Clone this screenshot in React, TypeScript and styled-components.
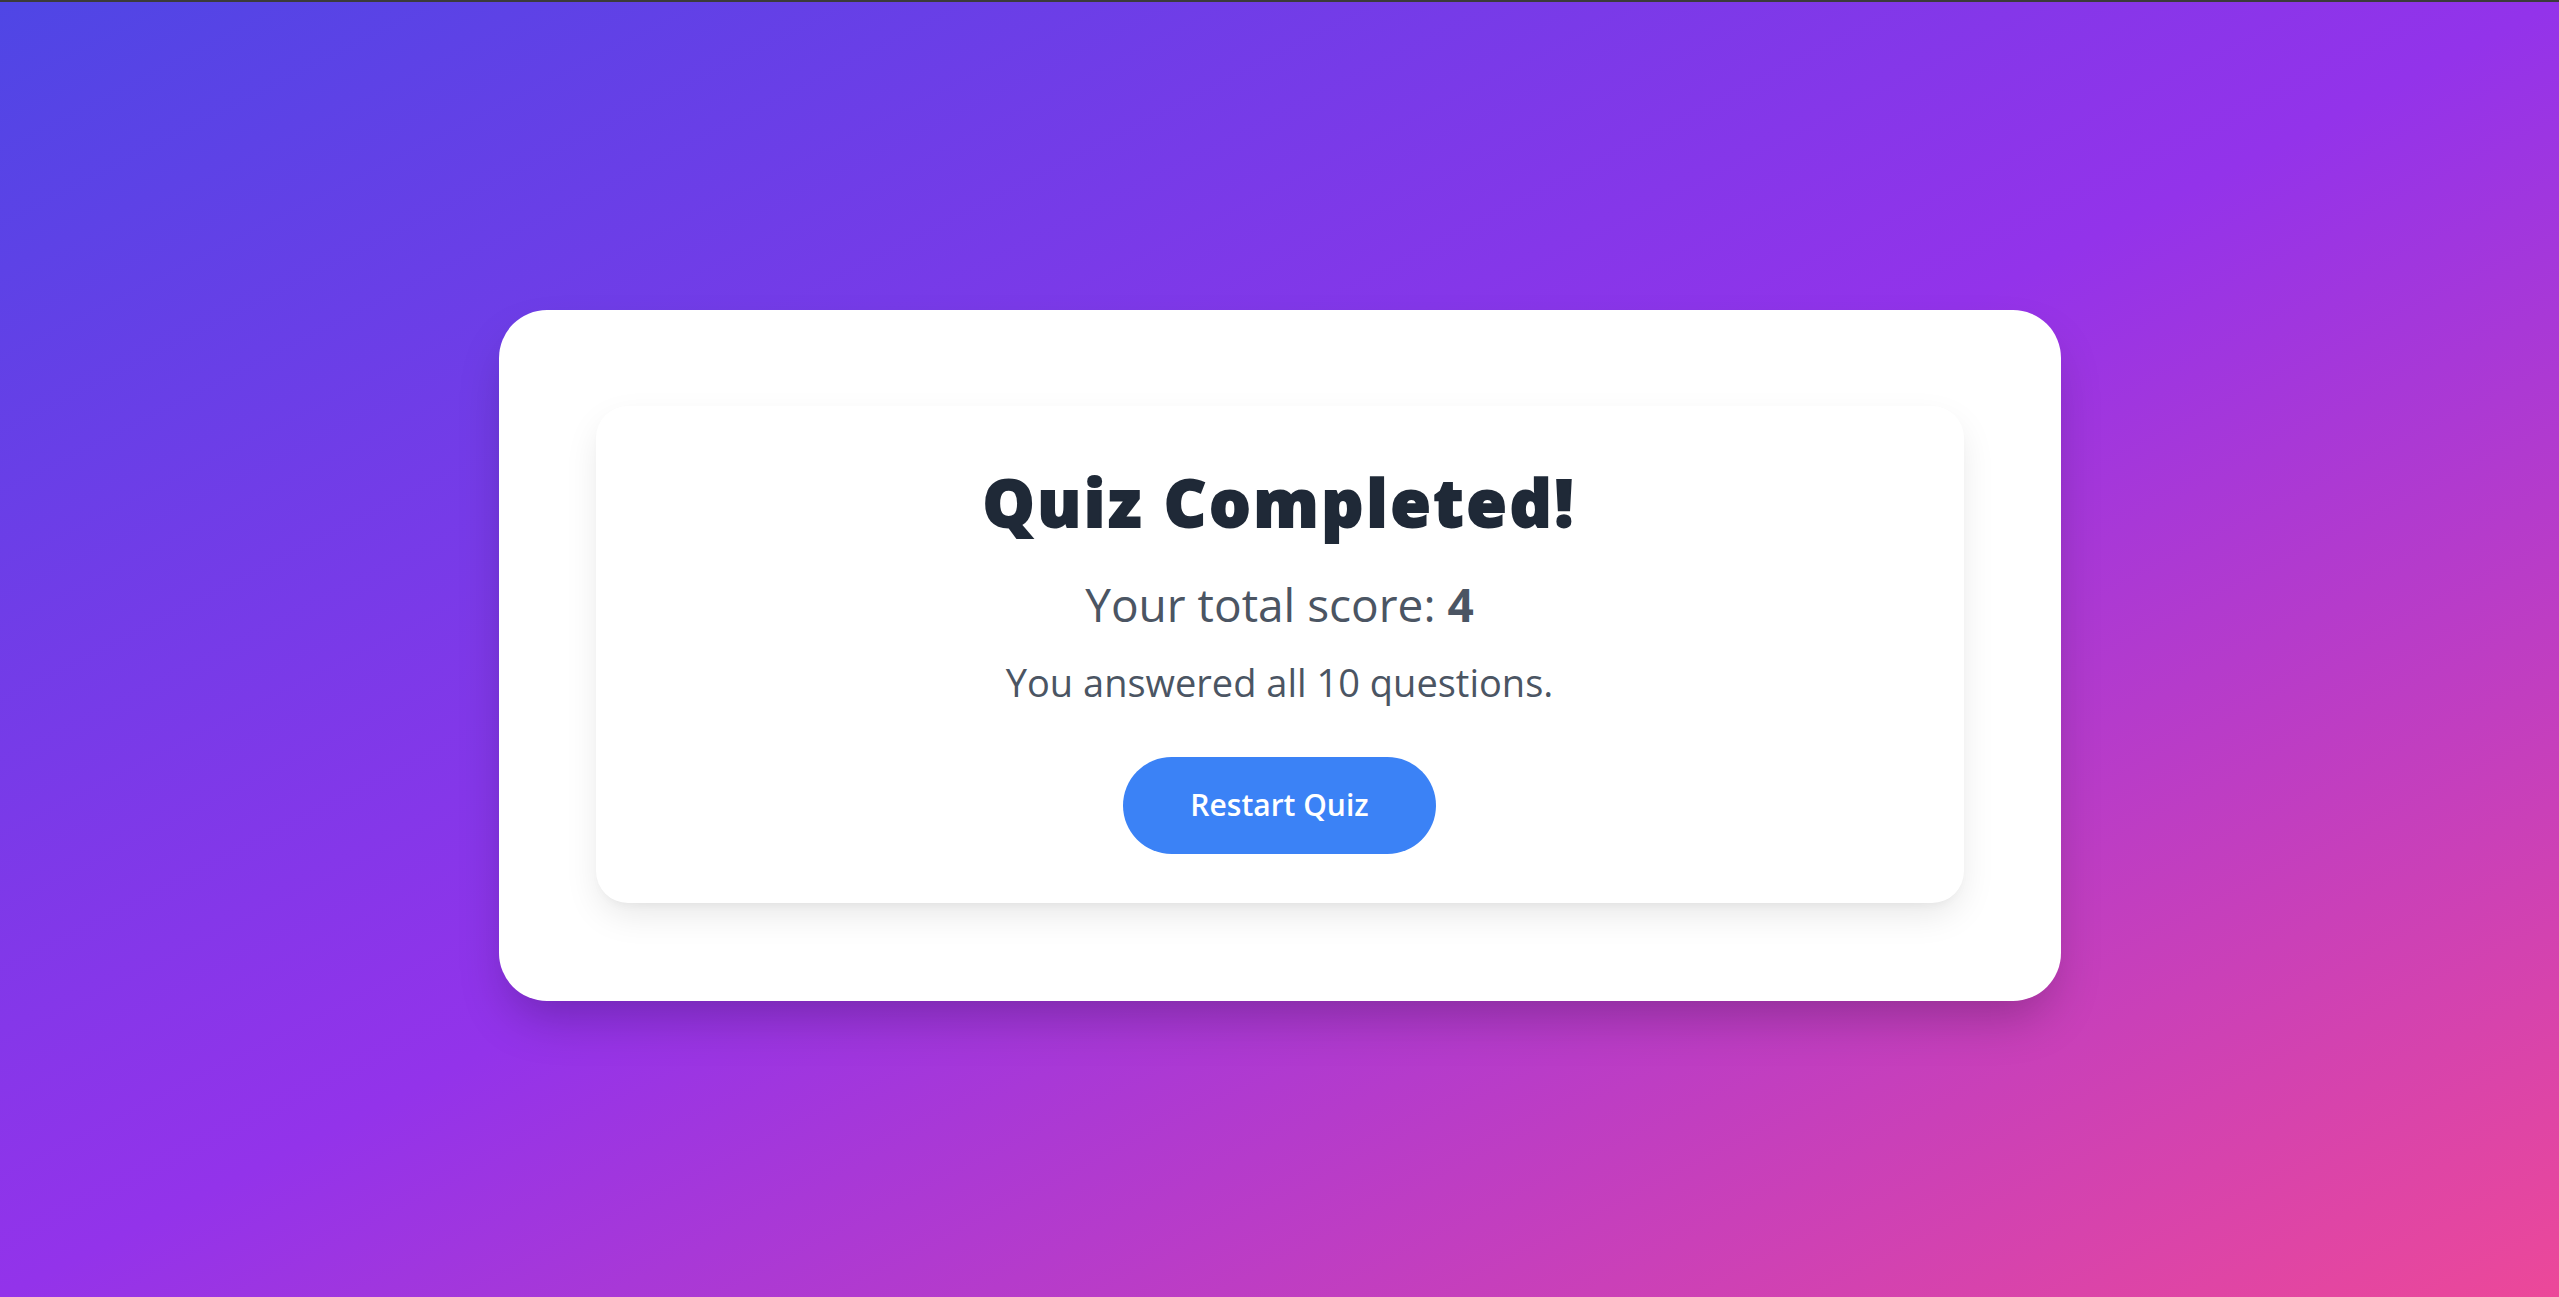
import React from "react";
import styled, { createGlobalStyle } from "styled-components";

const GlobalStyle = createGlobalStyle`
  * { box-sizing: border-box; }
  html, body { margin: 0; padding: 0; }
  body {
    font-family: "Open Sans", "Noto Sans", "Liberation Sans", sans-serif;
    border-top: 2px solid #3b3b3b;
  }
`;

const Page = styled.main`
  min-height: 1295px;
  display: flex;
  align-items: center;
  justify-content: center;
  padding-top: 11px;
  background: linear-gradient(to bottom right, #4f46e5 0%, #9333ea 50%, #ec4899 100%);
`;

const OuterCard = styled.section`
  width: 1562px;
  padding: 96px 97px 98px;
  background: #ffffff;
  border-radius: 48px;
  box-shadow: 0 25px 50px -12px rgba(0, 0, 0, 0.25);
`;

const ResultCard = styled.div`
  display: flex;
  flex-direction: column;
  align-items: center;
  padding: 60px 48px 49px;
  background: #ffffff;
  border-radius: 32px;
  box-shadow: 0 14px 36px -4px rgba(0, 0, 0, 0.1), 0 6px 12px -6px rgba(0, 0, 0, 0.06);
  text-align: center;
`;

const Title = styled.h1`
  margin: 0;
  font-size: 65px;
  line-height: 72px;
  font-weight: 800;
  letter-spacing: 3px;
  color: #1f2937;
  -webkit-text-stroke: 1.8px #1f2937;
`;

const Score = styled.p`
  margin: 36px 0 0;
  font-size: 46px;
  line-height: 60px;
  font-weight: 400;
  color: #4b5563;

  strong {
    font-weight: 700;
  }
`;

const Summary = styled.p`
  margin: 23px 0 0;
  font-size: 38px;
  line-height: 50px;
  font-weight: 400;
  color: #4b5563;
`;

const RestartButton = styled.button`
  margin-top: 50px;
  padding: 30px 67px 31px;
  border: none;
  border-radius: 9999px;
  background: #3b82f6;
  color: #ffffff;
  font-family: inherit;
  font-size: 30px;
  line-height: 36px;
  font-weight: 600;
  cursor: pointer;
`;

export default function App() {
  return (
    <>
      <GlobalStyle />
      <Page>
        <OuterCard>
          <ResultCard>
            <Title>Quiz Completed!</Title>
            <Score>
              Your total score: <strong>4</strong>
            </Score>
            <Summary>You answered all 10 questions.</Summary>
            <RestartButton type="button">Restart Quiz</RestartButton>
          </ResultCard>
        </OuterCard>
      </Page>
    </>
  );
}
